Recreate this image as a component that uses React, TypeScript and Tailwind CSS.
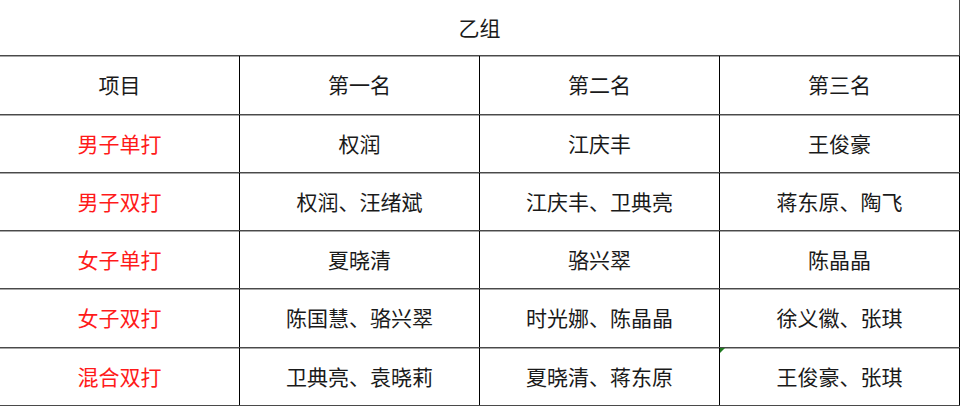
const header = ["项目", "第一名", "第二名", "第三名"];

const rows = [
    ["男子单打", "权润", "江庆丰", "王俊豪"],
    ["男子双打", "权润、汪绪斌", "江庆丰、卫典亮", "蒋东原、陶飞"],
    ["女子单打", "夏晓清", "骆兴翠", "陈晶晶"],
    ["女子双打", "陈国慧、骆兴翠", "时光娜、陈晶晶", "徐义徽、张琪"],
    ["混合双打", "卫典亮、袁晓莉", "夏晓清、蒋东原", "王俊豪、张琪"],
];

const heights = ["h-[58px]", "h-[58px]", "h-[58px]", "h-[59px]", "h-[58px]"];

export default function App() {
    return (
        <div className="w-[960px] h-[406px] bg-white text-[21px] text-[#1a1a1a] font-['Noto_Sans_CJK_SC','Noto_Sans',sans-serif]">
            <div className="flex h-[56px] items-center justify-center border-b border-r border-[#4a4a4a] shadow-[0_1px_0_#a8a8a8]">
                乙组
            </div>

            <div className="grid h-[59px] grid-cols-4 border-b border-[#4a4a4a] shadow-[0_1px_0_#a8a8a8]">
                {header.map((h) => (
                    <div key={h} className="flex items-center justify-center border-r border-black">
                        {h}
                    </div>
                ))}
            </div>

            {rows.map((row, i) => (
                <div
                    key={row[0]}
                    className={`grid grid-cols-4 border-b border-[#4a4a4a] ${heights[i]} ${
                        i < rows.length - 1 ? "shadow-[0_1px_0_#a8a8a8]" : ""
                    }`}
                >
                    {row.map((cell, j) => (
                        <div
                            key={j}
                            className={`relative flex items-center justify-center border-r border-black ${
                                j === 0 ? "text-[#ff1a1a]" : ""
                            }`}
                        >
                            {i === 4 && j === 3 && (
                                <svg className="absolute left-0 top-0" width="5" height="5" viewBox="0 0 5 5">
                                    <polygon points="0,0 5,0 0,5" fill="#1f7a1f" />
                                </svg>
                            )}
                            {cell}
                        </div>
                    ))}
                </div>
            ))}
        </div>
    );
}
